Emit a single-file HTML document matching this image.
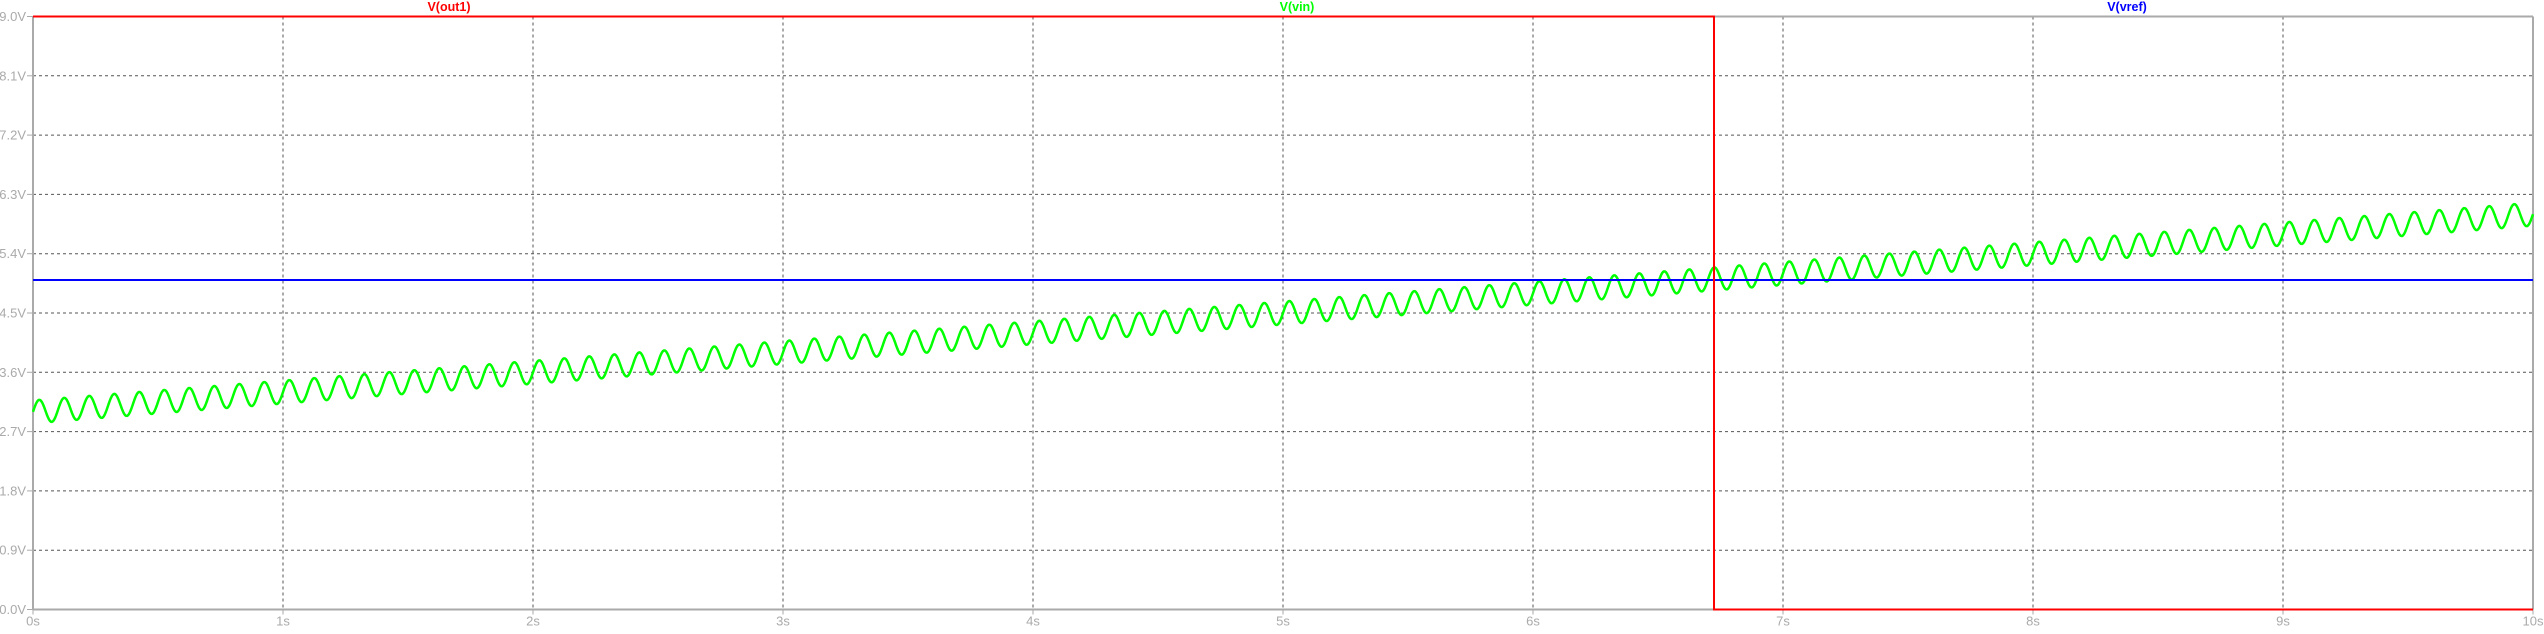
<!DOCTYPE html>
<html><head><meta charset="utf-8"><style>
html,body{margin:0;padding:0;background:#fff;width:2544px;height:634px;overflow:hidden}
svg{display:block}
text{font-family:"Liberation Sans",sans-serif}
</style></head><body>
<svg id="s" width="2544" height="634" xmlns="http://www.w3.org/2000/svg">
<g id="grid" stroke="#555" stroke-width="1" stroke-dasharray="3,3" fill="none"></g>
<g id="axes"></g>
<path id="vin" fill="none" stroke="#00ff00" stroke-width="2.5" stroke-linejoin="round"/>
<line x1="33" y1="280" x2="2533" y2="280" stroke="#0000ff" stroke-width="2"/>
<polyline points="33,16.5 1714,16.5 1714,609.5 2533,609.5" fill="none" stroke="#ff0000" stroke-width="2"/>
<text x="449" y="11" fill="#ff0000" font-size="12.5" font-weight="bold" text-anchor="middle">V(out1)</text>
<text x="1297" y="11" fill="#00ff00" font-size="12.5" font-weight="bold" text-anchor="middle">V(vin)</text>
<text x="2127" y="11" fill="#0000ff" font-size="12.5" font-weight="bold" text-anchor="middle">V(vref)</text>
</svg>
<script>
var ns="http://www.w3.org/2000/svg";
var L=33,R=2533,T=16.5,B=609.5,ppv=(B-T)/9,pps=(R-L)/10;
var g=document.getElementById('grid'),a=document.getElementById('axes');
function el(p,tag,at,txt){var e=document.createElementNS(ns,tag);for(var k in at)e.setAttribute(k,at[k]);if(txt)e.textContent=txt;p.appendChild(e);return e;}
var yl=["0.0V","0.9V","1.8V","2.7V","3.6V","4.5V","5.4V","6.3V","7.2V","8.1V","9.0V"];
for(var i=0;i<=10;i++){var y=B-i*0.9*ppv;
 if(i>0&&i<10)el(g,'line',{x1:L,y1:y,x2:R,y2:y});
 el(a,'line',{x1:L-6,y1:y,x2:L,y2:y,stroke:'#aaa','stroke-width':1});
 el(a,'text',{x:L-7,y:y+4.5,fill:'#aaa','font-size':'13','text-anchor':'end'},yl[i]);}
for(var i=0;i<=10;i++){var x=L+i*pps;
 if(i>0&&i<10)el(g,'line',{x1:x,y1:T,x2:x,y2:B});
 el(a,'line',{x1:x,y1:B,x2:x,y2:B+5,stroke:'#aaa','stroke-width':1});
 el(a,'text',{x:x,y:B+16,fill:'#aaa','font-size':'13','text-anchor':'middle'},i+'s');}
el(a,'line',{x1:L,y1:T,x2:L,y2:B,stroke:'#aaa','stroke-width':2});
el(a,'line',{x1:R,y1:T,x2:R,y2:B,stroke:'#aaa','stroke-width':2});
el(a,'line',{x1:L,y1:B,x2:R,y2:B,stroke:'#aaa','stroke-width':2});
el(a,'line',{x1:L,y1:T,x2:R,y2:T,stroke:'#aaa','stroke-width':2});
var d="";for(var px=0;px<=2500;px++){var t=px/pps;var v=3+0.3*t+0.175*Math.sin(2*Math.PI*10*t);
 d+=(px?"L":"M")+(L+px).toFixed(1)+","+(B-v*ppv).toFixed(2);}
document.getElementById('vin').setAttribute('d',d);
</script>
</body></html>
